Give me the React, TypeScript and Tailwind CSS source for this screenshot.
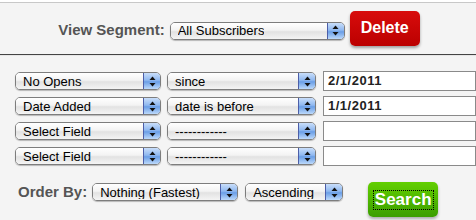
import React from "react"

const font = { fontFamily: '"Liberation Sans", Arial, sans-serif' }

function Arrows() {
  return (
    <svg width="7" height="11" viewBox="0 0 7 11" className="block">
      <path d="M3.5 0.5 L6.5 4 L0.5 4 Z" fill="#111" />
      <path d="M3.5 10.5 L6.5 7 L0.5 7 Z" fill="#111" />
    </svg>
  )
}

function AquaSelect({ label, width }: { label: string; width: string }) {
  return (
    <div
      className={`flex h-[18px] ${width} shrink-0 items-stretch overflow-hidden rounded-[5px] border border-[#7d7d7d] shadow-[0_1px_1px_rgba(0,0,0,0.25)]`}
    >
      <div className="flex min-w-0 flex-1 items-center bg-[linear-gradient(#ffffff,#f3f3f3_45%,#e2e2e2_55%,#f4f4f4)] pl-[7px] text-[13px] leading-none text-black">
        <span className="truncate">{label}</span>
      </div>
      <div className="flex w-[17px] items-center justify-center border-l border-[#4c5ea8] bg-[linear-gradient(#c9defa,#8fb8f0_45%,#6a9ee6_55%,#bcd9fb)]">
        <Arrows />
      </div>
    </div>
  )
}

function FieldInput({ value }: { value: string }) {
  return (
    <div className="flex h-[20px] flex-1 items-center border border-[#8a8a8a] bg-white pl-[4px] text-[13px] font-bold tracking-[0.5px] text-[#222]">
      {value}
    </div>
  )
}

const rows = [
  { field: "No Opens", op: "since", value: "2/1/2011" },
  { field: "Date Added", op: "date is before", value: "1/1/2011" },
  { field: "Select Field", op: "------------", value: "" },
  { field: "Select Field", op: "------------", value: "" },
]

export default function App() {
  return (
    <div className="h-[220px] w-[476px] overflow-hidden bg-[#f4f4f4]" style={font}>
      <div className="h-[2px] bg-white" />
      <div className="flex h-[52px] items-center justify-center border-t border-[#c8c8c8] pl-[2px]">
        <span className="mr-[5px] mt-[3px] text-[15px] font-bold text-[#555]">View Segment:</span>
        <div className="mt-[4px]">
          <AquaSelect label="All Subscribers" width="w-[175px]" />
        </div>
        <button
          type="button"
          className="ml-[5px] mt-[-1px] h-[35px] w-[70px] rounded-[5px] bg-[linear-gradient(#d80c0c,#bb0000)] text-[16px] font-bold text-white shadow-[0_2px_3px_rgba(0,0,0,0.35)]"
        >
          Delete
        </button>
      </div>
      <div className="h-[2px] border-t border-[#444] bg-[#e6e6e6]" />
      <div className="flex flex-col gap-[5px] pl-[15px] pt-[15px]">
        {rows.map((row, i) => (
          <div key={i} className="flex h-[20px] items-center">
            <AquaSelect label={row.field} width="w-[146px]" />
            <div className="w-[6px]" />
            <AquaSelect label={row.op} width="w-[149px]" />
            <div className="w-[7px]" />
            <FieldInput value={row.value} />
          </div>
        ))}
      </div>
      <div className="mt-[17px] flex items-start pl-[18px]">
        <span className="mr-[5px] text-[15px] font-bold leading-[18px] text-[#555]">Order By:</span>
        <AquaSelect label="Nothing (Fastest)" width="w-[146px]" />
        <div className="w-[7px]" />
        <AquaSelect label="Ascending" width="w-[98px]" />
        <button
          type="button"
          className="ml-[25px] mt-[-1px] flex h-[35px] w-[70px] items-center justify-center rounded-[5px] bg-[linear-gradient(#62cf00,#3b9e00)] text-[17px] font-bold text-white shadow-[0_2px_3px_rgba(0,0,0,0.3)]"
        >
          <span className="border border-dotted border-black px-[1px] leading-[18px]">Search</span>
        </button>
      </div>
    </div>
  )
}
